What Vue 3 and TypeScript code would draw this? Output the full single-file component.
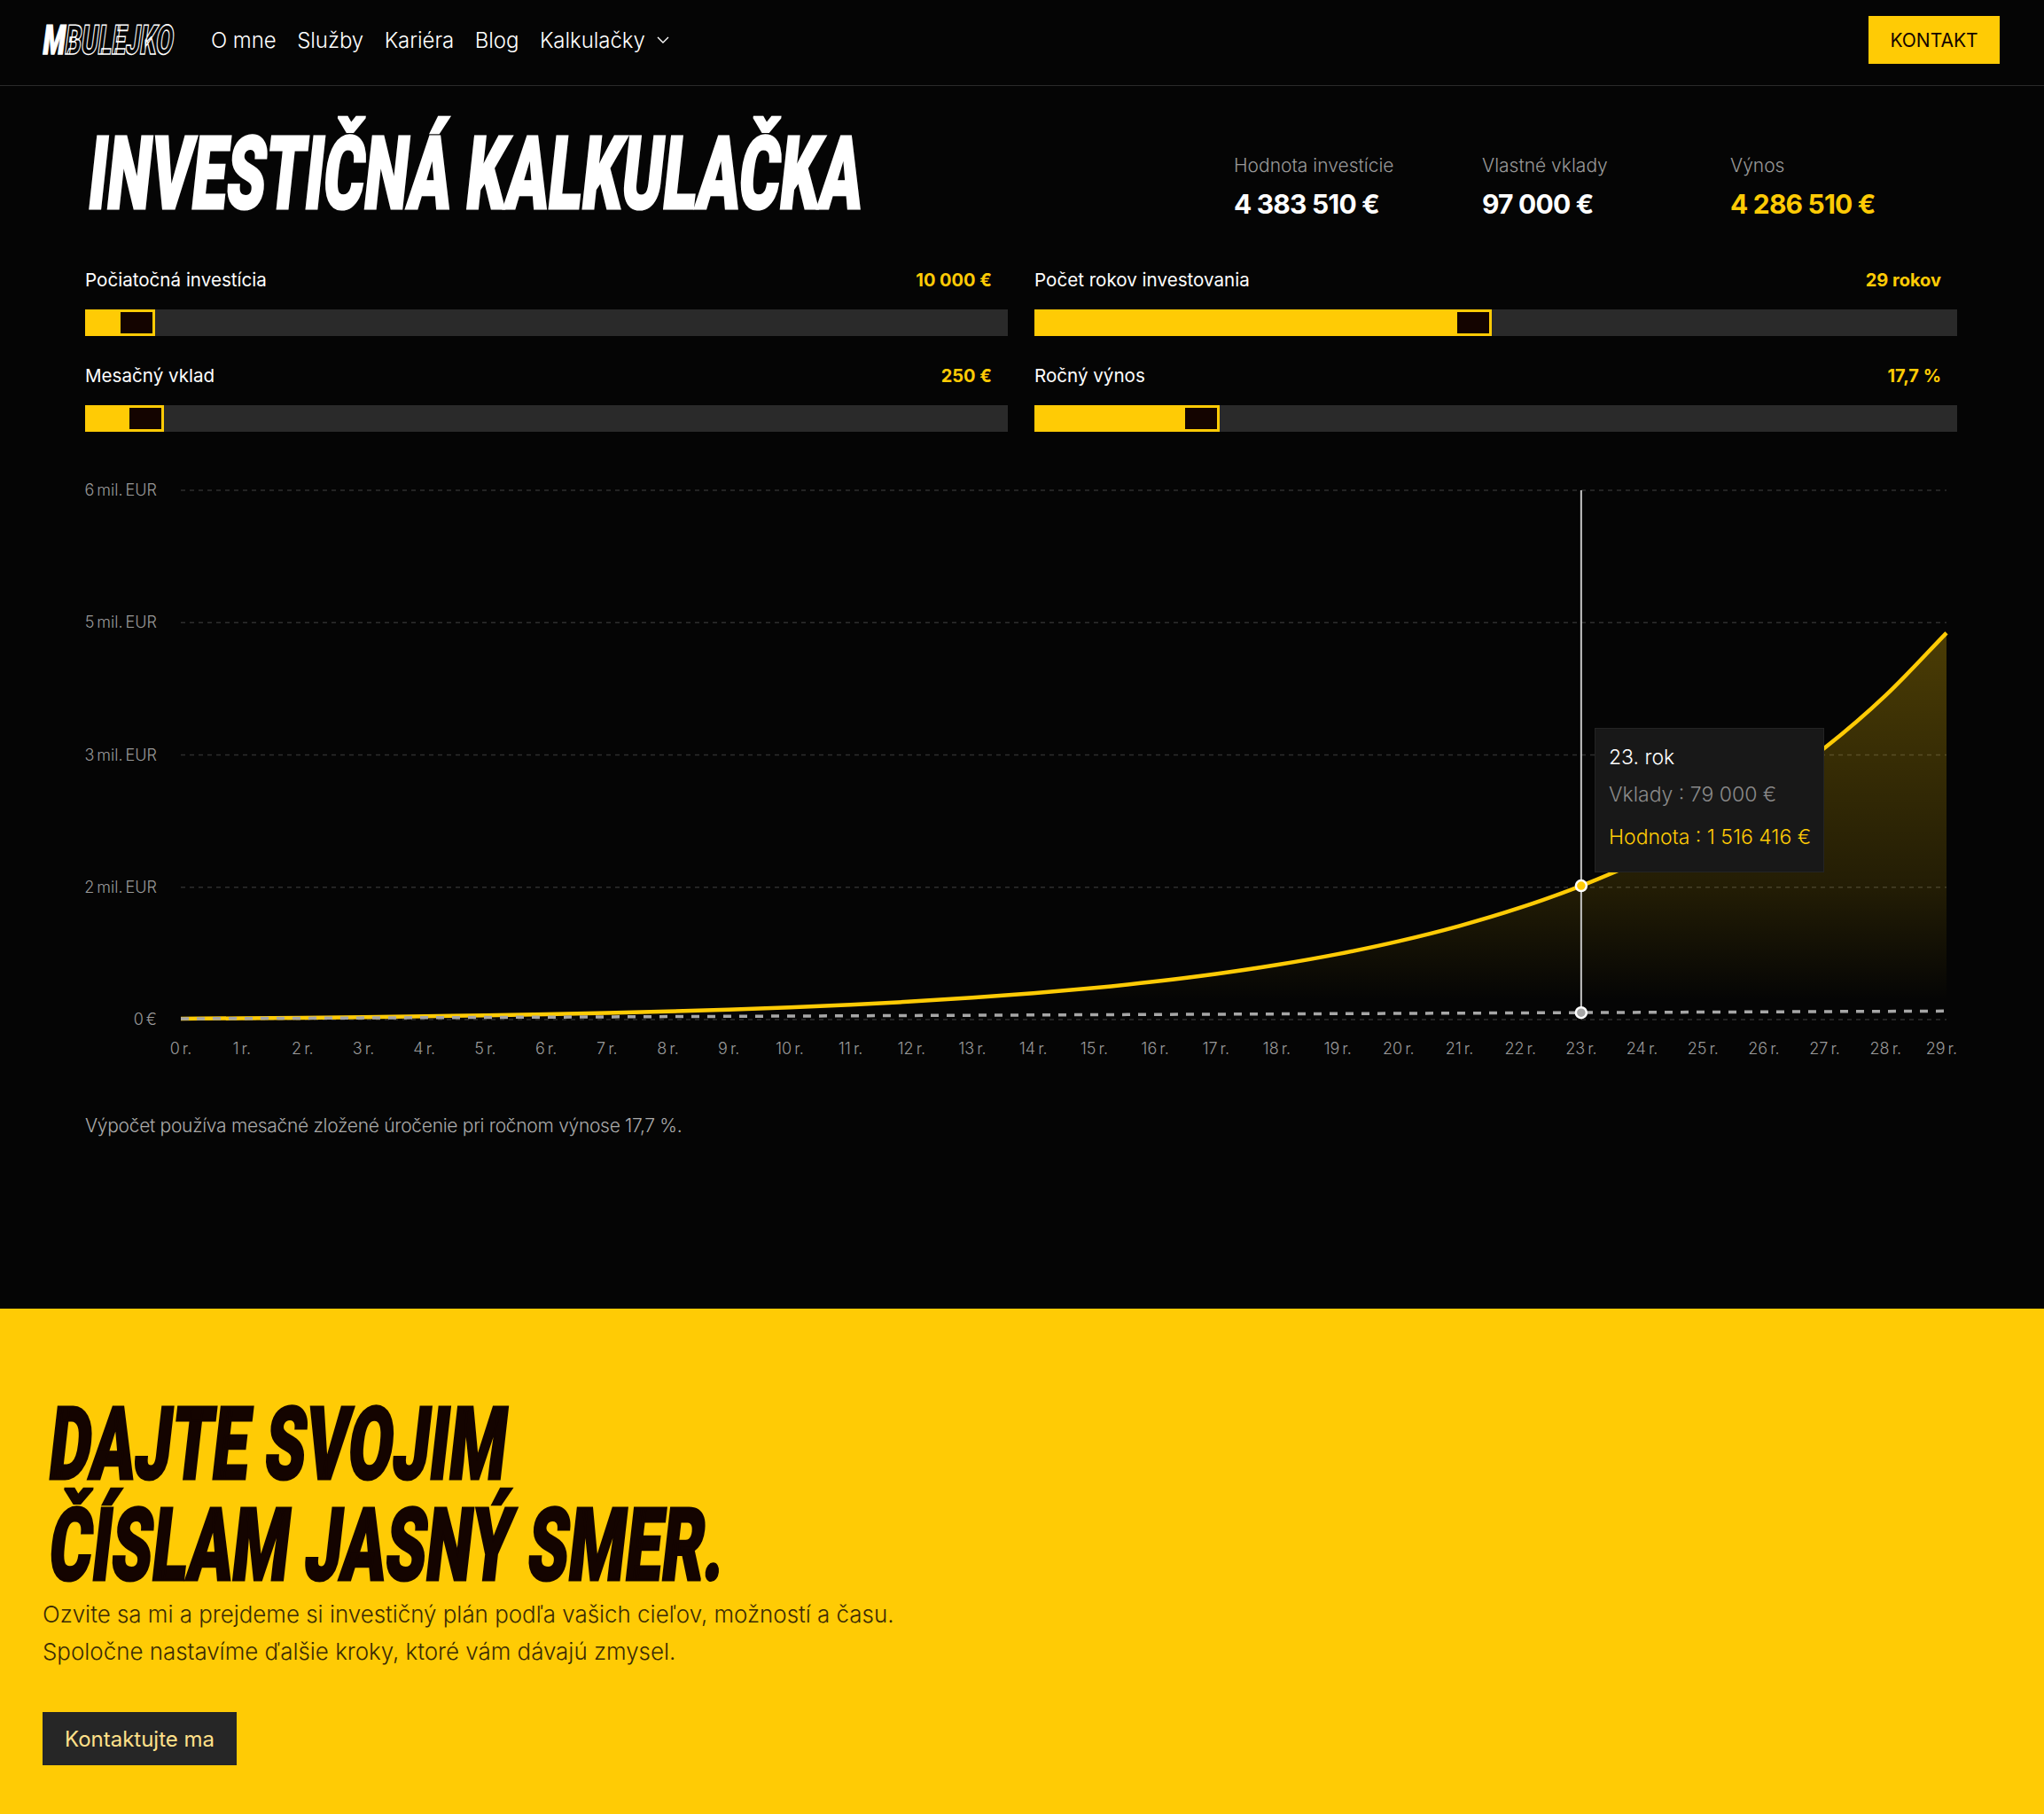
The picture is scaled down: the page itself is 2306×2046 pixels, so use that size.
<template>
  <div class="page">
    <header class="topbar">
      <div class="logo"><span class="logo-text"><b>M</b><span class="logo-outline">BULEJKO</span></span></div>
      <nav class="nav">
        <a v-for="item in navItems" :key="item">{{ item }}</a>
        <a class="nav-drop">
          Kalkulačky
          <svg width="14" height="8" viewBox="0 0 14 8" fill="none">
            <path d="M1 1l6 6 6-6" stroke="#fff" stroke-width="1.4" />
          </svg>
        </a>
      </nav>
      <button class="contact-btn">KONTAKT</button>
    </header>

    <main class="calc">
      <div class="calc-head">
        <h1 class="display title">INVESTIČNÁ KALKULAČKA</h1>
        <div class="stats">
          <div v-for="s in stats" :key="s.label" class="stat">
            <div class="stat-label">{{ s.label }}</div>
            <div class="stat-value" :class="{ accent: s.accent }">{{ s.value }}</div>
          </div>
        </div>
      </div>

      <div class="controls">
        <div v-for="c in controls" :key="c.label" class="control">
          <div class="control-row">
            <span>{{ c.label }}</span>
            <strong>{{ c.value }}</strong>
          </div>
          <div class="track">
            <div class="fill" :style="{ width: c.fill + 'px' }"><div class="thumb"></div></div>
          </div>
        </div>
      </div>

      <div class="chart">
        <svg width="2114" height="680" class="chart-svg">
          <defs>
            <linearGradient id="areaFill" x1="0" y1="0" x2="0" y2="1">
              <stop offset="0" stop-color="#ffcb05" stop-opacity="0.28" />
              <stop offset="0.66" stop-color="#ffcb05" stop-opacity="0.12" />
              <stop offset="0.95" stop-color="#ffcb05" stop-opacity="0" />
            </linearGradient>
          </defs>
          <g v-for="t in yTicks" :key="t.label">
            <line :x1="x0" :x2="x1" :y1="t.y" :y2="t.y" class="grid" />
            <text :x="81" :y="t.y + 6" text-anchor="end" class="tick">{{ t.label }}</text>
          </g>
          <path :d="areaPath" fill="url(#areaFill)" />
          <text
            v-for="n in years"
            :key="n"
            :x="n === 29 ? 2112 : xAt(n)"
            y="649"
            :text-anchor="n === 29 ? 'end' : 'middle'"
            class="tick"
          >{{ n }} r.</text>
          <path :d="valuePath" class="line-value" />
          <path :d="depositPath" class="line-deposit" />
          <line :x1="xAt(23)" :x2="xAt(23)" :y1="y0" :y2="yAt(deposit(23))" class="cursor" />
          <circle :cx="xAt(23)" :cy="yAt(value(23))" r="6" fill="#ffcb05" class="dot" />
          <circle :cx="xAt(23)" :cy="yAt(deposit(23))" r="6" fill="#a6a6a6" class="dot" />
        </svg>
        <div class="tooltip">
          <div class="tip-year">23. rok</div>
          <div class="tip-dep">Vklady : 79 000 €</div>
          <div class="tip-val">Hodnota : 1 516 416 €</div>
        </div>
      </div>

      <p class="note">Výpočet používa mesačné zložené úročenie pri ročnom výnose 17,7 %.</p>
    </main>

    <section class="cta">
      <h2 class="cta-title">
        <span class="display cta-line">DAJTE SVOJIM</span>
        <span class="display cta-line second">ČÍSLAM JASNÝ SMER.</span>
      </h2>
      <p class="cta-text">
        Ozvite sa mi a prejdeme si investičný plán podľa vašich cieľov, možností a času.<br />
        Spoločne nastavíme ďalšie kroky, ktoré vám dávajú zmysel.
      </p>
      <button class="cta-btn">Kontaktujte ma</button>
    </section>
  </div>
</template>

<script setup lang="ts">
const navItems = ["O mne", "Služby", "Kariéra", "Blog"];

const stats = [
  { label: "Hodnota investície", value: "4 383 510 €" },
  { label: "Vlastné vklady", value: "97 000 €" },
  { label: "Výnos", value: "4 286 510 €", accent: true },
];

const controls = [
  { label: "Počiatočná investícia", value: "10 000 €", fill: 79 },
  { label: "Počet rokov investovania", value: "29 rokov", fill: 516 },
  { label: "Mesačný vklad", value: "250 €", fill: 89 },
  { label: "Ročný výnos", value: "17,7 %", fill: 209 },
];

// chart geometry, relative to the svg origin
const x0 = 108;
const x1 = 2100;
const y0 = 13;
const yBase = 610;
const maxValue = 6000000;

const years = Array.from({ length: 30 }, (_, i) => i);
const rate = 0.177 / 12;

const value = (n: number) => {
  const g = Math.pow(1 + rate, 12 * n);
  return 10000 * g + (250 * (g - 1)) / rate;
};
const deposit = (n: number) => 10000 + 3000 * n;
const xAt = (n: number) => x0 + ((x1 - x0) * n) / 29;
const yAt = (v: number) => yBase - ((yBase - y0) * v) / maxValue;

const yTicks = [
  { label: "6 mil. EUR", y: yAt(6000000) },
  { label: "5 mil. EUR", y: yAt(4500000) },
  { label: "3 mil. EUR", y: yAt(3000000) },
  { label: "2 mil. EUR", y: yAt(1500000) },
  { label: "0 €", y: yAt(0) },
];

const smooth = (fn: (n: number) => number) => {
  const step = xAt(1) - xAt(0);
  const slope = (n: number) => {
    const a = n > 0 ? fn(n - 1) : fn(n);
    const b = n < 29 ? fn(n + 1) : fn(n);
    return (yAt(b) - yAt(a)) / ((n > 0 ? 1 : 0) + (n < 29 ? 1 : 0));
  };
  let d = `M${xAt(0)},${yAt(fn(0))}`;
  for (let n = 0; n < 29; n++) {
    const c1 = yAt(fn(n)) + slope(n) / 3;
    const c2 = yAt(fn(n + 1)) - slope(n + 1) / 3;
    d += `C${xAt(n) + step / 3},${c1} ${xAt(n + 1) - step / 3},${c2} ${xAt(n + 1)},${yAt(fn(n + 1))}`;
  }
  return d;
};

const valuePath = smooth(value);
const depositPath = smooth(deposit);
const areaPath = `${valuePath}L${x1},${yBase}L${x0},${yBase}Z`;
</script>

<style>
html,
body {
  margin: 0;
  background: #050505;
}
</style>

<style scoped>
.page {
  width: 2306px;
  height: 2046px;
  overflow: hidden;
  background: #050505;
  color: #fff;
  font-family: Inter, "Noto Sans", sans-serif;
}

.topbar {
  display: flex;
  align-items: center;
  height: 90px;
  box-sizing: content-box;
  border-bottom: 1px solid #2a2a2a;
  padding: 0 50px 6px 49px;
}

.logo {
  width: 146px;
  height: 34px;
}

.logo-text {
  display: block;
  width: 300px;
  font-family: "Roboto", sans-serif;
  font-size: 46px;
  line-height: 34px;
  font-weight: 900;
  white-space: nowrap;
  transform-origin: left center;
  transform: scaleX(0.62) skewX(-12deg);
}

.logo-text b {
  font-weight: 900;
  -webkit-text-stroke: 1.5px #fff;
}

.logo-outline {
  color: #050505;
  -webkit-text-stroke: 1.6px #fff;
}

.nav {
  display: flex;
  align-items: center;
  gap: 23.5px;
  margin-left: 43px;
  font-size: 24px;
  font-weight: 300;
  letter-spacing: -0.05px;
}

.nav-drop {
  display: flex;
  align-items: center;
  gap: 13px;
}

.contact-btn {
  margin-left: auto;
  width: 148px;
  height: 54px;
  border: 0;
  background: #ffcb05;
  color: #140400;
  font-family: inherit;
  font-size: 21px;
  font-weight: 400;
}

.calc {
  height: 1379px;
  padding: 0 96px;
}

.calc-head {
  display: flex;
  height: 204px;
}

.display {
  margin: 0;
  font-family: "Roboto", sans-serif;
  font-weight: 900;
  font-size: 114px;
  line-height: 114px;
  white-space: nowrap;
  -webkit-text-stroke: 3px currentColor;
}

.title {
  width: 880px;
  height: 114px;
  margin: 42px 0 0 5px;
  transform-origin: left center;
  transform: scaleX(0.615) skewX(-10deg);
}

.stats {
  display: grid;
  grid-template-columns: 280px 280px 258px;
  margin-left: auto;
  padding-top: 75px;
}

.stat-label {
  font-size: 21px;
  line-height: 30px;
  font-weight: 300;
  color: #999;
}

.stat-value {
  margin-top: 10px;
  font-size: 30px;
  line-height: 36px;
  font-weight: 700;
  letter-spacing: -0.8px;
}

.accent {
  color: #ffcb05;
}

.controls {
  display: grid;
  grid-template-columns: 1041px 1041px;
  gap: 30px;
}

.control-row {
  display: flex;
  justify-content: space-between;
  height: 30px;
  margin-bottom: 18px;
  padding-right: 18px;
  font-size: 20.6px;
  line-height: 30px;
}

.control-row strong {
  color: #ffcb05;
  font-weight: 700;
  font-size: 20px;
}

.track {
  height: 30px;
  background: #2a2a2a;
}

.fill {
  display: flex;
  justify-content: flex-end;
  height: 30px;
  background: #ffcb05;
}

.thumb {
  width: 42px;
  height: 30px;
  box-sizing: border-box;
  border: 3px solid #ffcb05;
  background: #140400;
}

.chart {
  position: relative;
  height: 680px;
  margin-top: 53px;
}

.chart-svg {
  display: block;
}

.grid {
  stroke: #2e2e2e;
  stroke-width: 1.5;
  stroke-dasharray: 5 5;
}

.tick {
  fill: #999;
  font-size: 18px;
  word-spacing: -2px;
  font-weight: 300;
}

.line-value {
  fill: none;
  stroke: #ffcb05;
  stroke-width: 4.5;
}

.line-deposit {
  fill: none;
  stroke: #a6a6a6;
  stroke-width: 3.5;
  stroke-dasharray: 9 9;
}

.cursor {
  stroke: #c4c4c4;
  stroke-width: 2;
}

.dot {
  stroke: #fff;
  stroke-width: 2.5;
}

.tooltip {
  position: absolute;
  left: 1703px;
  top: 281px;
  width: 259px;
  height: 163px;
  box-sizing: border-box;
  padding: 18px 15px 0;
  background: #181818;
  border: 1px solid #242424;
  font-size: 23px;
  font-weight: 300;
  white-space: nowrap;
}

.tip-dep {
  margin-top: 14px;
  color: #8a8a8a;
}

.tip-val {
  margin-top: 20px;
  color: #ffcb05;
}

.note {
  margin: 35px 0 0;
  font-size: 21px;
  line-height: 30px;
  font-weight: 300;
  letter-spacing: -0.3px;
  color: #aaa;
}

.cta {
  height: 570px;
  box-sizing: border-box;
  padding: 96px 48px 0;
  background: #ffcb05;
  color: #140400;
}

.cta-title {
  margin: 0;
}

.cta-line {
  display: block;
  width: 900px;
  margin-left: 9px;
  transform-origin: left center;
  transform: scaleX(0.643) skewX(-10deg);
}

.cta-text {
  margin: 0;
  font-size: 25.9px;
  line-height: 42px;
  font-weight: 300;
  color: #3a2a05;
}

.cta-btn {
  display: block;
  width: 219px;
  height: 60px;
  margin-top: 47px;
  border: 0;
  background: #262626;
  color: #ffe08a;
  font-family: inherit;
  font-size: 24px;
  font-weight: 400;
}
</style>
